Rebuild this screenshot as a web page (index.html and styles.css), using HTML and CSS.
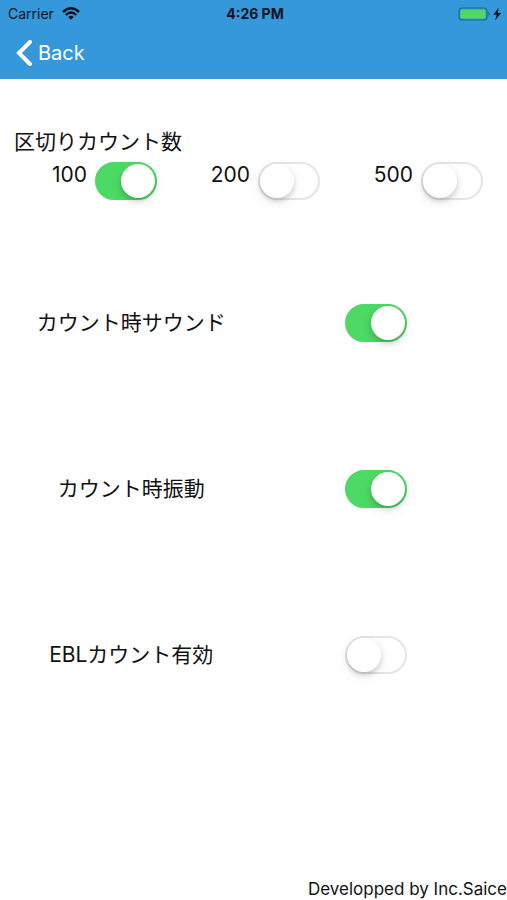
FILE: index.html
```html
<!DOCTYPE html>
<html lang="ja">
<head>
    <meta charset="UTF-8">
    <meta name="viewport" content="width=device-width, initial-scale=1">
    <title>Settings</title>
    <link rel="stylesheet" href="styles.css">
</head>
<body>
    <header class="header">
        <div class="status-bar">
            <div class="carrier">
                <span>Carrier</span>
                <svg class="wifi" viewBox="0 0 18 13" width="18" height="13" aria-hidden="true">
                    <g fill="none" stroke="#08131b" stroke-width="2.4">
                        <path d="M1 5 Q9 -2.4 17 5"/>
                        <path d="M3.8 8 Q9 3 14.2 8"/>
                    </g>
                    <path d="M9 12.8 L6.2 9.9 Q9 7.6 11.8 9.9 Z" fill="#08131b"/>
                </svg>
            </div>
            <span class="clock">4:26 PM</span>
            <div class="power">
                <svg viewBox="0 0 44 14" width="44" height="14" aria-hidden="true">
                    <rect x="1" y="1" width="28" height="12" rx="3" fill="none" stroke="#24658f" stroke-width="1.2"/>
                    <rect x="2.4" y="2.4" width="25.2" height="9.2" rx="1.6" fill="#4cd964"/>
                    <path d="M30.4 4.6 Q33 7 30.4 9.4 Z" fill="#24658f"/>
                    <path d="M40.6 .8 L35.4 7.8 H38.6 L37.2 13.2 L43 6 H39.8 Z" fill="#08131b"/>
                </svg>
            </div>
        </div>
        <nav class="nav-bar">
            <a class="back" href="#">
                <svg viewBox="0 0 16 26" width="16" height="26" aria-hidden="true">
                    <path d="M14 2 L3 13 L14 24" fill="none" stroke="#fff" stroke-width="4" stroke-linecap="round" stroke-linejoin="miter"/>
                </svg>
                <span>Back</span>
            </a>
        </nav>
    </header>

    <main class="settings">
        <section class="count-section">
            <h2>区切りカウント数</h2>
            <div class="count-options">
                <div class="option">
                    <label for="count100">100</label>
                    <input class="switch" type="checkbox" id="count100" checked>
                </div>
                <div class="option">
                    <label for="count200">200</label>
                    <input class="switch" type="checkbox" id="count200">
                </div>
                <div class="option">
                    <label for="count500">500</label>
                    <input class="switch" type="checkbox" id="count500">
                </div>
            </div>
        </section>

        <div class="row">
            <label for="sound">カウント時サウンド</label>
            <input class="switch" type="checkbox" id="sound" checked>
        </div>
        <div class="row">
            <label for="vibration">カウント時振動</label>
            <input class="switch" type="checkbox" id="vibration" checked>
        </div>
        <div class="row">
            <label for="ebl">EBLカウント有効</label>
            <input class="switch" type="checkbox" id="ebl">
        </div>
    </main>

    <footer class="footer">Developped by Inc.Saice</footer>
</body>
</html>
```

FILE: styles.css
```css
* {
    margin: 0;
    padding: 0;
    box-sizing: border-box;
}

body {
    display: flex;
    flex-direction: column;
    min-height: 100vh;
    background: #fff;
    color: #111;
    font-family: Inter, "Noto Sans CJK JP", sans-serif;
    font-size: 20px;
    line-height: 30px;
}

/* Header */
.header {
    background: #3498db;
}

.status-bar {
    display: grid;
    grid-template-columns: 1fr auto 1fr;
    align-items: center;
    height: 27px;
    padding: 0 5px 0 8px;
    color: #08131b;
    font-size: 14px;
    line-height: 27px;
}

.carrier {
    display: flex;
    align-items: center;
    gap: 8px;
}

.clock {
    font-weight: 700;
}

.power {
    display: flex;
    justify-content: flex-end;
}

.nav-bar {
    display: flex;
    align-items: center;
    height: 52px;
    padding-left: 16px;
}

.back {
    display: flex;
    align-items: center;
    gap: 6px;
    color: #fff;
    text-decoration: none;
}

/* Settings */
.settings {
    flex: 1;
}

.count-section {
    padding: 48px 0 40px;
}

h2 {
    margin-bottom: 5px;
    padding-left: 14px;
    font-size: 21px;
    font-weight: 400;
}

.count-options {
    display: grid;
    grid-template-columns: repeat(3, 1fr);
    padding: 0 9px;
}

.option {
    display: flex;
    justify-content: flex-end;
    align-items: flex-start;
    gap: 8px;
    padding-right: 15px;
    font-size: 21px;
    line-height: 26px;
}

.row {
    display: grid;
    grid-template-columns: 1fr 1fr;
    align-items: center;
    justify-items: center;
    padding: 64px 9px;
    font-size: 21px;
}

/* Switch */
.switch {
    appearance: none;
    flex: none;
    display: flex;
    align-items: center;
    width: 62px;
    height: 38px;
    border: 2px solid #e5e5e5;
    border-radius: 19px;
    background: #fff;
    cursor: pointer;
}

.switch::before {
    content: "";
    width: 34px;
    height: 34px;
    border-radius: 50%;
    background: #fff;
    box-shadow: 0 3px 5px rgba(0, 0, 0, 0.16), 0 4px 14px rgba(0, 0, 0, 0.08);
}

.switch:checked {
    justify-content: flex-end;
    border-color: #4cd964;
    background: #4cd964;
}

/* Footer */
.footer {
    padding-bottom: 1px;
    text-align: right;
    font-size: 17px;
    line-height: 20px;
}
```
